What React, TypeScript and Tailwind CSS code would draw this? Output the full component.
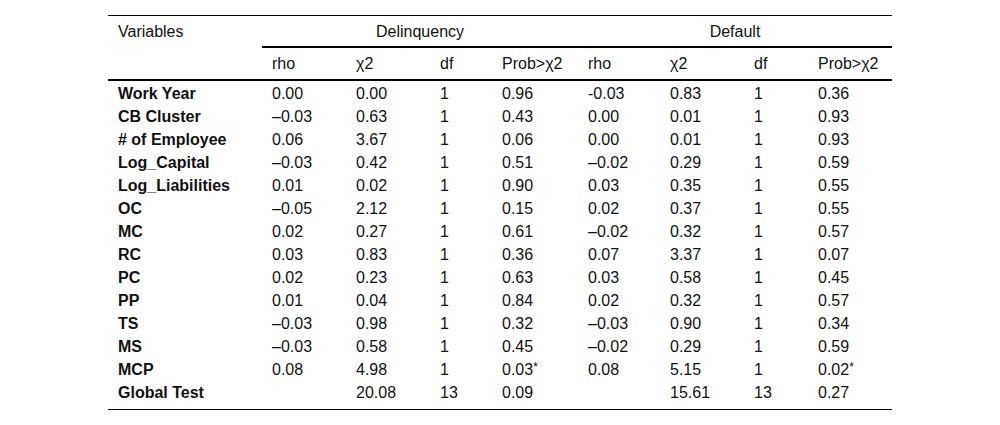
const widths = [
  "w-[154px]",
  "w-[84px]",
  "w-[84px]",
  "w-[62px]",
  "w-[86px]",
  "w-[82px]",
  "w-[84px]",
  "w-[64px]",
  "w-[84px]",
];

const headers = ["rho", "χ2", "df", "Prob>χ2", "rho", "χ2", "df", "Prob>χ2"];

const rows: string[][] = [
  ["Work Year", "0.00", "0.00", "1", "0.96", "-0.03", "0.83", "1", "0.36"],
  ["CB Cluster", "–0.03", "0.63", "1", "0.43", "0.00", "0.01", "1", "0.93"],
  ["# of Employee", "0.06", "3.67", "1", "0.06", "0.00", "0.01", "1", "0.93"],
  ["Log_Capital", "–0.03", "0.42", "1", "0.51", "–0.02", "0.29", "1", "0.59"],
  ["Log_Liabilities", "0.01", "0.02", "1", "0.90", "0.03", "0.35", "1", "0.55"],
  ["OC", "–0.05", "2.12", "1", "0.15", "0.02", "0.37", "1", "0.55"],
  ["MC", "0.02", "0.27", "1", "0.61", "–0.02", "0.32", "1", "0.57"],
  ["RC", "0.03", "0.83", "1", "0.36", "0.07", "3.37", "1", "0.07"],
  ["PC", "0.02", "0.23", "1", "0.63", "0.03", "0.58", "1", "0.45"],
  ["PP", "0.01", "0.04", "1", "0.84", "0.02", "0.32", "1", "0.57"],
  ["TS", "–0.03", "0.98", "1", "0.32", "–0.03", "0.90", "1", "0.34"],
  ["MS", "–0.03", "0.58", "1", "0.45", "–0.02", "0.29", "1", "0.59"],
  ["MCP", "0.08", "4.98", "1", "0.03*", "0.08", "5.15", "1", "0.02*"],
  ["Global Test", "", "20.08", "13", "0.09", "", "15.61", "13", "0.27"],
];

function Cell({ value }: { value: string }) {
  if (value.endsWith("*")) {
    return (
      <>
        {value.slice(0, -1)}
        <span className="text-[12px] relative top-[-4px]">*</span>
      </>
    );
  }
  return <>{value}</>;
}

export default function App() {
  return (
    <div
      className="w-[1000px] h-[425px] bg-white text-[16px] text-[#111] pt-[15px]"
      style={{ fontFamily: '"Liberation Sans", Arial, sans-serif' }}
    >
      <div className="ml-[108px] w-[784px] border-t border-black">
        {/* group header */}
        <div className="flex h-[32px] leading-none">
          <div className={`${widths[0]} pl-[10px] pt-[8px]`}>Variables</div>
          <div className="w-[316px] flex justify-center pt-[8px] border-b-2 border-black">
            Delinquency
          </div>
          <div className="w-[314px] flex justify-center pt-[8px] border-b-2 border-black">
            Default
          </div>
        </div>
        {/* column header */}
        <div className="flex h-[33px] items-center border-b-2 border-black">
          <div className={widths[0]} />
          {headers.map((h, i) => (
            <div key={i} className={`${widths[i + 1]} pl-[10px]`}>
              {h}
            </div>
          ))}
        </div>
        {/* body */}
        <div className="pt-[1px] pb-[5px] border-b border-black">
          {rows.map((r, ri) => (
            <div key={ri} className="flex h-[23px] items-center">
              {r.map((v, ci) => (
                <div
                  key={ci}
                  className={`${widths[ci]} pl-[10px] whitespace-nowrap ${
                    ci === 0 ? "font-bold" : ""
                  }`}
                >
                  <Cell value={v} />
                </div>
              ))}
            </div>
          ))}
        </div>
      </div>
    </div>
  );
}
